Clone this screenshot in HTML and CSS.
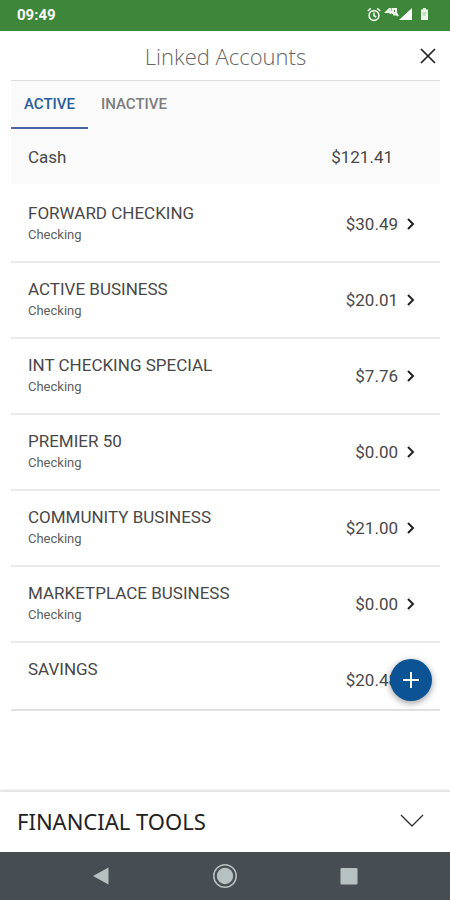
FILE: index.html
```html
<!DOCTYPE html>
<html lang="en">
<head>
<meta charset="utf-8">
<meta name="viewport" content="width=device-width, initial-scale=1">
<title>Linked Accounts</title>
<link rel="stylesheet" href="styles.css">
</head>
<body>
<div class="app">
  <div class="status">
    <span class="clock">09:49</span>
    <svg class="status-icons" width="64" height="18" viewBox="0 0 64 18" aria-hidden="true">
      <g fill="none" stroke="#edf8ea" stroke-width="1.6">
        <circle cx="8" cy="9.500" r="4.900"/>
        <path d="M8 6.500v3.300l2.200 1.200M1.800 5 4.800 2.400M14.200 5l-3-2.600"/>
      </g>
      <g fill="none" stroke="#edf8ea" stroke-width="2">
        <path d="M24 2.500 20.500 6h6M24.500 2v6"/>
        <path d="M27 3h3v4h-3zM27 8.500h4M29.500 6l2.500 4"/>
      </g>
      <path d="M46 2v12H33z" fill="#fff"/>
      <path d="M55 3.500h2V2h3v1.500h2V14h-7z" fill="#edf8ea"/>
      <path d="M56.500 7h4M56.500 9h3" stroke="#9cc497"/>
    </svg>
  </div>

  <header class="header">
    <h1>Linked Accounts</h1>
    <button class="close" type="button" aria-label="Close">
      <svg width="16" height="16" viewBox="0 0 16 16"><path d="M1 1l14 14M15 1 1 15" fill="none" stroke="#222" stroke-width="1.7"/></svg>
    </button>
  </header>

  <main class="accounts">
    <div class="summary">
      <nav class="tabs">
        <button class="tab active" type="button">ACTIVE</button>
        <button class="tab" type="button">INACTIVE</button>
      </nav>
      <div class="cash"><span>Cash</span><span>$121.41</span></div>
    </div>
    <ul class="list">
      <li><a class="row" href="#"><span class="name">FORWARD CHECKING<small>Checking</small></span><span class="amount">$30.49</span><svg class="chevron" width="8" height="12" viewBox="0 0 8 12"><path d="M1 1l5 5-5 5"/></svg></a></li>
      <li><a class="row" href="#"><span class="name">ACTIVE BUSINESS<small>Checking</small></span><span class="amount">$20.01</span><svg class="chevron" width="8" height="12" viewBox="0 0 8 12"><path d="M1 1l5 5-5 5"/></svg></a></li>
      <li><a class="row" href="#"><span class="name">INT CHECKING SPECIAL<small>Checking</small></span><span class="amount">$7.76</span><svg class="chevron" width="8" height="12" viewBox="0 0 8 12"><path d="M1 1l5 5-5 5"/></svg></a></li>
      <li><a class="row" href="#"><span class="name">PREMIER 50<small>Checking</small></span><span class="amount">$0.00</span><svg class="chevron" width="8" height="12" viewBox="0 0 8 12"><path d="M1 1l5 5-5 5"/></svg></a></li>
      <li><a class="row" href="#"><span class="name">COMMUNITY BUSINESS<small>Checking</small></span><span class="amount">$21.00</span><svg class="chevron" width="8" height="12" viewBox="0 0 8 12"><path d="M1 1l5 5-5 5"/></svg></a></li>
      <li><a class="row" href="#"><span class="name">MARKETPLACE BUSINESS<small>Checking</small></span><span class="amount">$0.00</span><svg class="chevron" width="8" height="12" viewBox="0 0 8 12"><path d="M1 1l5 5-5 5"/></svg></a></li>
      <li class="last"><a class="row" href="#"><span class="name">SAVINGS</span><span class="amount">$20.48</span><svg class="chevron" width="8" height="12" viewBox="0 0 8 12"><path d="M1 1l5 5-5 5"/></svg></a>
        <button class="add" type="button" aria-label="Add account"><svg width="16" height="16" viewBox="0 0 16 16"><path d="M8 0v16M0 8h16" stroke="#fff" stroke-width="2"/></svg></button>
      </li>
    </ul>
  </main>

  <button class="tools" type="button">
    <span>FINANCIAL TOOLS</span>
    <svg width="24" height="14" viewBox="0 0 24 14" aria-hidden="true"><path d="M1 1l11 11L23 1" fill="none" stroke="#333" stroke-width="1.4"/></svg>
  </button>

  <nav class="system">
    <button type="button" aria-label="Back"><svg width="26" height="26" viewBox="0 0 26 26"><path d="M20.500 4.500v17L5 13z" fill="#b8c1c1"/></svg></button>
    <button type="button" aria-label="Home"><svg width="26" height="26" viewBox="0 0 26 26"><circle cx="13" cy="13" r="11.200" fill="none" stroke="#b8c1c1" stroke-width="1.500"/><circle cx="13" cy="13" r="8.200" fill="#b8c1c1"/></svg></button>
    <button type="button" aria-label="Recent apps"><svg width="26" height="26" viewBox="0 0 26 26"><rect x="4.500" y="5" width="17" height="16.500" rx="1" fill="#b8c1c1"/></svg></button>
  </nav>
</div>
</body>
</html>
```
FILE: styles.css
```css
* { box-sizing: border-box; }

body {
  margin: 0;
  background: #fff;
  color: #484848;
  font-family: Roboto, "Liberation Sans", sans-serif;
}

button {
  margin: 0;
  padding: 0;
  border: 0;
  background: none;
  font: inherit;
  color: inherit;
}

svg { display: block; }

.app {
  display: flex;
  flex-direction: column;
  min-height: 100vh;
}

.status {
  display: flex;
  justify-content: space-between;
  align-items: center;
  height: 31px;
  padding: 0 20px 2px 17px;
  background: #3e863a;
}

.clock {
  color: #fff;
  font-size: 15px;
  font-weight: 700;
}

.header {
  display: grid;
  grid-template-columns: 24px 1fr 24px;
  align-items: center;
  height: 50px;
  margin: 0 10px 0 11px;
  border-bottom: 1px solid #dedede;
}

.header h1 {
  grid-column: 2;
  margin: 0;
  color: #666;
  font-family: "Open Sans", sans-serif;
  font-size: 22px;
  font-weight: 300;
  line-height: 26px;
  text-align: center;
}

.close {
  display: flex;
  justify-content: center;
}

.accounts { margin: 0 10px 0 11px; }

.summary { background: #fafafa; }

.tabs { display: flex; }

.tab {
  height: 48px;
  padding: 0 13px;
  border-bottom: 2px solid transparent;
  color: #7c7c7c;
  font-size: 15px;
  font-weight: 500;
}

.tab.active {
  border-color: #4a66a5;
  color: #2d5a99;
}

.cash {
  display: flex;
  justify-content: space-between;
  align-items: center;
  height: 55px;
  padding: 0 47px 0 17px;
  font-size: 17px;
}

.list {
  margin: 0;
  padding: 3px 0 0;
  list-style: none;
}

.list li {
  position: relative;
  border-bottom: 2px solid #ebebeb;
}

.list .last { border-color: #e0e0e0; }

.row {
  display: flex;
  align-items: center;
  min-height: 74px;
  padding: 0 25px 0 17px;
  color: inherit;
  font-size: 17px;
  text-decoration: none;
}

.last .row {
  min-height: 66px;
}

.name {
  flex: 1;
  align-self: flex-start;
  padding-top: 15px;
  line-height: 22px;
}

.name small {
  display: block;
  color: #606060;
  font-size: 13px;
}

.amount { margin-right: 9px; }

.last .amount,
.last .chevron { margin-top: 8px; }

.chevron {
  fill: none;
  stroke: #222;
  stroke-width: 2;
}

.add {
  position: absolute;
  top: 16px;
  right: 8px;
  display: grid;
  place-items: center;
  width: 42px;
  height: 42px;
  border-radius: 50%;
  background: #0b5394;
  box-shadow: 0 2px 7px #0006;
}

.tools {
  display: flex;
  justify-content: space-between;
  align-items: center;
  height: 61px;
  margin-top: auto;
  padding: 0 26px 2px 17px;
  border-top: 1px solid #e4e4e4;
  box-shadow: 0 -1px 2px #0002;
  color: #222;
  font-family: "Noto Sans", sans-serif;
  font-size: 22px;
}

.system {
  display: flex;
  justify-content: center;
  gap: 98px;
  align-items: center;
  height: 48px;
  background: #464e53;
}
```
